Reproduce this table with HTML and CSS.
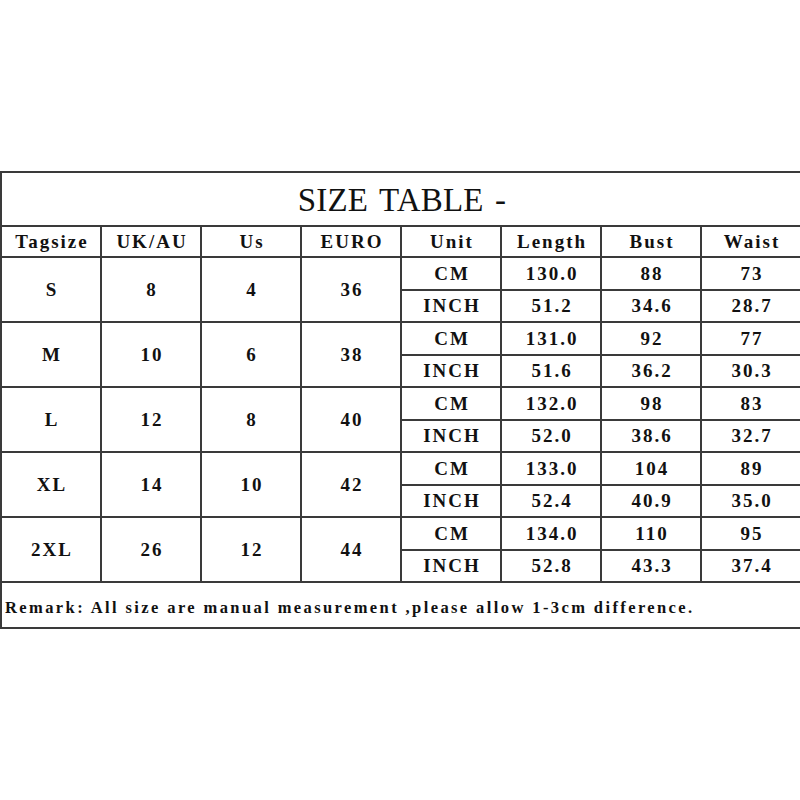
FILE: index.html
```html
<!DOCTYPE html>
<html>
<head>
<meta charset="utf-8">
<title>Size Table</title>
<link rel="stylesheet" href="styles.css">
</head>
<body>
<div class="page">
<table class="size-table">
  <colgroup>
    <col><col><col><col><col><col><col><col>
  </colgroup>
  <tr class="title-row"><td colspan="8" class="title">SIZE TABLE -</td></tr>
  <tr class="head-row">
    <td>Tagsize</td><td>UK/AU</td><td>Us</td><td>EURO</td><td>Unit</td><td>Length</td><td>Bust</td><td>Waist</td>
  </tr>
  <tr class="sub a"><td rowspan="2">S</td><td rowspan="2">8</td><td rowspan="2">4</td><td rowspan="2">36</td><td class="unit">CM</td><td>130.0</td><td>88</td><td>73</td></tr>
  <tr class="sub b"><td class="unit">INCH</td><td>51.2</td><td>34.6</td><td>28.7</td></tr>
  <tr class="sub a"><td rowspan="2">M</td><td rowspan="2">10</td><td rowspan="2">6</td><td rowspan="2">38</td><td class="unit">CM</td><td>131.0</td><td>92</td><td>77</td></tr>
  <tr class="sub b"><td class="unit">INCH</td><td>51.6</td><td>36.2</td><td>30.3</td></tr>
  <tr class="sub a"><td rowspan="2">L</td><td rowspan="2">12</td><td rowspan="2">8</td><td rowspan="2">40</td><td class="unit">CM</td><td>132.0</td><td>98</td><td>83</td></tr>
  <tr class="sub b"><td class="unit">INCH</td><td>52.0</td><td>38.6</td><td>32.7</td></tr>
  <tr class="sub a"><td rowspan="2">XL</td><td rowspan="2">14</td><td rowspan="2">10</td><td rowspan="2">42</td><td class="unit">CM</td><td>133.0</td><td>104</td><td>89</td></tr>
  <tr class="sub b"><td class="unit">INCH</td><td>52.4</td><td>40.9</td><td>35.0</td></tr>
  <tr class="sub a"><td rowspan="2">2XL</td><td rowspan="2">26</td><td rowspan="2">12</td><td rowspan="2">44</td><td class="unit">CM</td><td>134.0</td><td>110</td><td>95</td></tr>
  <tr class="sub b"><td class="unit">INCH</td><td>52.8</td><td>43.3</td><td>37.4</td></tr>
  <tr class="remark-row"><td colspan="8" class="remark">Remark: All size are manual measurement ,please allow 1-3cm difference.</td></tr>
</table>
</div>
</body>
</html>
```

FILE: styles.css
```css
html, body {
  margin: 0;
  padding: 0;
  background: #fff;
}

.page {
  padding-top: 171px;
}

.size-table {
  width: 800px;
  table-layout: fixed;
  border-collapse: collapse;
  border: 2px solid #000;
  font-family: "Liberation Serif", "DejaVu Serif", serif;
  color: #111;
}

.size-table col {
  width: 100px;
}

.size-table td {
  border: 2px solid #3a3a3a;
  text-align: center;
  vertical-align: middle;
  padding: 0 0 0 2px;
  font-size: 19px;
  font-weight: bold;
  letter-spacing: 2px;
  line-height: 1;
}

.size-table td.title {
  height: 49px;
  font-size: 33px;
  font-weight: normal;
  letter-spacing: 0.2px;
  word-spacing: 3px;
  padding-top: 3px;
}

.head-row td {
  height: 29px;
}

.sub td {
  height: 30.5px;
}

.size-table td.remark {
  height: 38px;
  text-align: left;
  font-size: 16.5px;
  letter-spacing: 2.4px;
  padding: 6px 0 0 3px;
  white-space: nowrap;
}
```
